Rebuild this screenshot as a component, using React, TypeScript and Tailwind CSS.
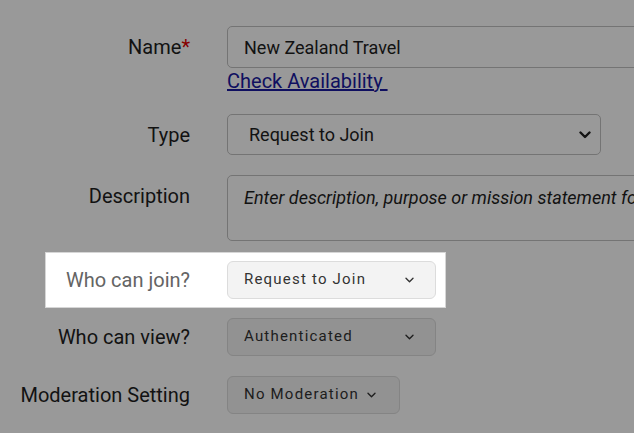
import React from 'react';

const Chevron: React.FC<{ bold?: boolean }> = ({ bold }) =>
  bold ? (
    <svg width="12" height="8" viewBox="0 0 12 8" className="shrink-0">
      <path d="M1.5 1.5 L6 6 L10.5 1.5" fill="none" stroke="#222" strokeWidth="2.4" strokeLinecap="round" strokeLinejoin="round" />
    </svg>
  ) : (
    <svg width="9" height="6" viewBox="0 0 9 6" className="shrink-0">
      <path d="M1 1.2 L4.5 4.7 L8 1.2" fill="none" stroke="#333" strokeWidth="1.4" strokeLinecap="round" strokeLinejoin="round" />
    </svg>
  );

const SmallSelect: React.FC<{ value: string; wide?: boolean }> = ({ value, wide }) => (
  <div
    className={`h-[38px] flex items-center rounded-[6px] border border-[#dcdcdc] bg-[#f3f3f3] pl-[16px] text-[15px] tracking-[1.2px] text-[#333] ${
      wide ? 'w-[209px] justify-between pr-[21px]' : 'gap-[8px] pr-[23px]'
    }`}
  >
    <span className="pb-[1px]">{value}</span>
    <Chevron />
  </div>
);

const Label: React.FC<{ children: React.ReactNode; className?: string }> = ({ children, className }) => (
  <div className={`w-[190px] shrink-0 text-right text-[20px] text-[#1e1e1e] ${className ?? ''}`}>{children}</div>
);

export default function App() {
  return (
    <div
      className="relative w-[634px] h-[433px] overflow-hidden bg-white"
      style={{ fontFamily: 'Roboto, "Liberation Sans", sans-serif' }}
    >
      <div className="pt-[26px]">
        {/* Name */}
        <div className="flex items-start">
          <Label className="h-[42px] flex items-center justify-end">
            Name<span className="text-[#e00000]">*</span>
          </Label>
          <div className="ml-[37px] flex flex-col">
            <div className="h-[42px] w-[560px] flex items-center rounded-[5px] border border-[#c2c2c2] pl-[16px] text-[18px] text-[#1e1e1e]">
              New Zealand Travel
            </div>
            <a href="#" className="mt-[2px] block leading-[23px] text-[20px] text-[#1a1aa0] underline">
              Check Availability&nbsp;
            </a>
          </div>
        </div>

        {/* Type */}
        <div className="mt-[21px] flex items-center">
          <Label>Type</Label>
          <div className="ml-[37px] h-[41px] w-[374px] flex items-center justify-between rounded-[5px] border border-[#c2c2c2] pl-[21px] pr-[9px] text-[18px] text-[#1e1e1e]">
            <span>Request to Join</span>
            <Chevron bold />
          </div>
        </div>

        {/* Description */}
        <div className="mt-[20px] flex items-start">
          <Label className="pt-[9px] leading-[24px]">Description</Label>
          <div className="ml-[37px] h-[66px] w-[560px] rounded-[5px] border border-[#c2c2c2] pl-[16px] pt-[10px] leading-[24px] text-[18px] italic text-[#1e1e1e] whitespace-nowrap">
            Enter description, purpose or mission statement for your group
          </div>
        </div>

        {/* Who can join (highlighted) */}
        <div className="relative z-20 mt-[11px] ml-[45px] w-[401px] h-[56px] flex items-center bg-white border border-[#d6d6d6]">
          <div className="w-[144px] shrink-0 text-right text-[20px] text-[#646464]">Who can join?</div>
          <div className="ml-[37px]">
            <SmallSelect value="Request to Join" wide />
          </div>
        </div>

        {/* Who can view */}
        <div className="mt-[10px] flex items-center">
          <Label>Who can view?</Label>
          <div className="ml-[37px]">
            <SmallSelect value="Authenticated" wide />
          </div>
        </div>

        {/* Moderation */}
        <div className="mt-[20px] flex items-center">
          <Label>Moderation Setting</Label>
          <div className="ml-[37px]">
            <SmallSelect value="No Moderation" />
          </div>
        </div>
      </div>

      {/* spotlight overlay */}
      <div className="absolute inset-0 z-10 bg-black/40" />
    </div>
  );
}
